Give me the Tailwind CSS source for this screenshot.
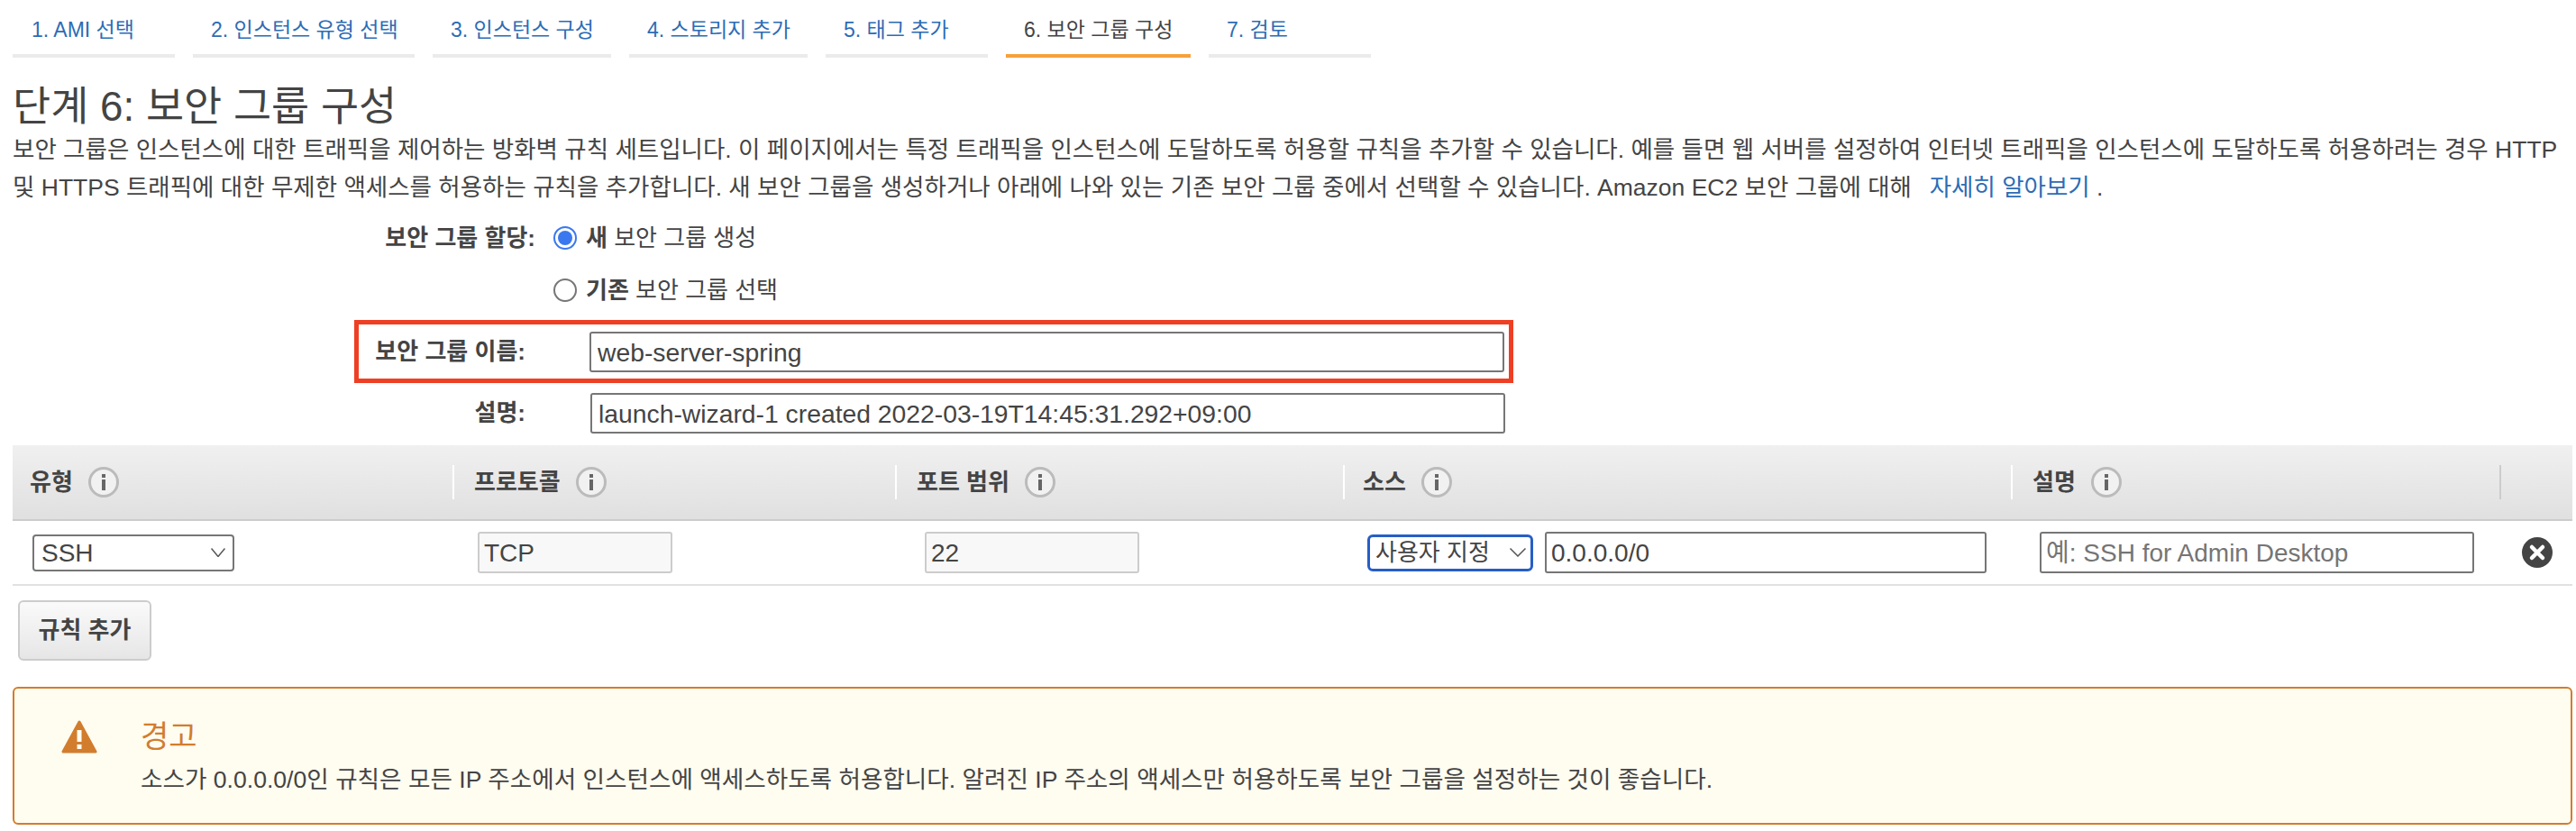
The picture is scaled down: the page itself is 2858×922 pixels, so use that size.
<!DOCTYPE html>
<html lang="ko">
<head>
  <meta charset="UTF-8" />
  <title>단계 6: 보안 그룹 구성</title>
  <script src="https://cdn.jsdelivr.net/npm/@tailwindcss/browser@4"></script>
</head>
<body class="bg-white text-[#444] text-[26px] leading-[41px] font-['Liberation_Sans','Noto_Sans_CJK_KR',sans-serif] overflow-hidden">
<div class="w-[2858px] h-[922px] pl-[14px] pr-[4px]">

  <!-- wizard tabs -->
  <nav class="flex gap-[20px] h-[64px] text-[23px] leading-[30px] text-[#2d6cb5]">
    <a class="w-[180px] pt-[18px] pl-[21px] border-b-4 border-[#ebebeb]">1. AMI 선택</a>
    <a class="w-[246px] pt-[18px] pl-[20px] border-b-4 border-[#ebebeb]">2. 인스턴스 유형 선택</a>
    <a class="w-[198px] pt-[18px] pl-[20px] border-b-4 border-[#ebebeb]">3. 인스턴스 구성</a>
    <a class="w-[198px] pt-[18px] pl-[20px] border-b-4 border-[#ebebeb]">4. 스토리지 추가</a>
    <a class="w-[180px] pt-[18px] pl-[20px] border-b-4 border-[#ebebeb]">5. 태그 추가</a>
    <a class="w-[205px] pt-[18px] pl-[20px] border-b-4 border-[#f7a13c] text-[#444]">6. 보안 그룹 구성</a>
    <a class="w-[180px] pt-[18px] pl-[20px] border-b-4 border-[#ebebeb]">7. 검토</a>
  </nav>

  <h1 class="mt-[28px] mb-[-1px] text-[45.8px] leading-[54px] font-normal">단계 6: 보안 그룹 구성</h1>
  <p class="text-[26.5px] leading-[42px]">보안 그룹은 인스턴스에 대한 트래픽을 제어하는 방화벽 규칙 세트입니다. 이 페이지에서는 특정 트래픽을 인스턴스에 도달하도록 허용할 규칙을 추가할 수 있습니다. 예를 들면 웹 서버를 설정하여 인터넷 트래픽을 인스턴스에 도달하도록 허용하려는 경우 HTTP<br />및 HTTPS 트래픽에 대한 무제한 액세스를 허용하는 규칙을 추가합니다. 새 보안 그룹을 생성하거나 아래에 나와 있는 기존 보안 그룹 중에서 선택할 수 있습니다. Amazon EC2 보안 그룹에 대해 &nbsp;<a class="ml-[5px] text-[#2d6cb5]">자세히 알아보기</a> .</p>

  <!-- security group form -->
  <div class="mt-[15px] flex items-center h-[40px]">
    <label class="w-[580px] text-right font-bold">보안 그룹 할당:</label>
    <span class="ml-[20px] w-[26px] h-[26px] rounded-full border-2 border-[#3b78f0] flex items-center justify-center">
      <span class="w-[16px] h-[16px] rounded-full bg-[#3b78f0]"></span>
    </span>
    <span class="ml-[10px]"><b>새</b> 보안 그룹 생성</span>
  </div>
  <div class="mt-[18px] flex items-center h-[40px]">
    <span class="ml-[600px] w-[26px] h-[26px] rounded-full border-2 border-[#767676] bg-white"></span>
    <span class="ml-[10px]"><b>기존</b> 보안 그룹 선택</span>
  </div>

  <div class="mt-[13px] ml-[379px] w-[1286px] h-[70px] border-[5px] border-[#ee3f24] flex items-center">
    <label class="w-[185px] text-right font-bold shrink-0">보안 그룹 이름:</label>
    <input class="ml-[71px] w-[1015px] h-[45px] border-2 border-[#767676] rounded-[3px] px-[7px] pt-[3px] text-[28.3px] text-[#444] outline-none" value="web-server-spring" />
  </div>
  <div class="mt-[11px] flex items-center">
    <label class="w-[569px] text-right font-bold shrink-0">설명:</label>
    <input class="ml-[72px] w-[1015px] h-[45px] border-2 border-[#767676] rounded-[3px] px-[7px] pt-[2px] text-[28.3px] text-[#444] outline-none" value="launch-wizard-1 created 2022-03-19T14:45:31.292+09:00" />
  </div>

  <!-- rules table -->
  <div class="mt-[13px] w-[2840px] h-[84px] flex items-center border-b-2 border-[#ccc] bg-gradient-to-b from-[#f0f0f0] to-[#e0e0e0] font-bold">
    <div class="w-[490px] h-[38px] flex items-center pl-[19px] border-r-2 border-[#fff]">유형<i class="ml-[17px] w-[34px] h-[34px] flex items-center justify-center"><svg width="34" height="34" viewBox="0 0 34 34"><circle cx="17" cy="17" r="15.5" fill="#f1f1f1" stroke="#bbb" stroke-width="3"/><rect x="15" y="14" width="4" height="12" fill="#666"/><rect x="15" y="8" width="4" height="4" fill="#666"/></svg></i></div>
    <div class="w-[491px] h-[38px] flex items-center pl-[22px] border-r-2 border-[#fff]">프로토콜<i class="ml-[17px] w-[34px] h-[34px] flex items-center justify-center"><svg width="34" height="34" viewBox="0 0 34 34"><circle cx="17" cy="17" r="15.5" fill="#f1f1f1" stroke="#bbb" stroke-width="3"/><rect x="15" y="14" width="4" height="12" fill="#666"/><rect x="15" y="8" width="4" height="4" fill="#666"/></svg></i></div>
    <div class="w-[497px] h-[38px] flex items-center pl-[22px] border-r-2 border-[#fff]">포트 범위<i class="ml-[17px] w-[34px] h-[34px] flex items-center justify-center"><svg width="34" height="34" viewBox="0 0 34 34"><circle cx="17" cy="17" r="15.5" fill="#f1f1f1" stroke="#bbb" stroke-width="3"/><rect x="15" y="14" width="4" height="12" fill="#666"/><rect x="15" y="8" width="4" height="4" fill="#666"/></svg></i></div>
    <div class="w-[741px] h-[38px] flex items-center pl-[20px] border-r-2 border-[#fff]">소스<i class="ml-[17px] w-[34px] h-[34px] flex items-center justify-center"><svg width="34" height="34" viewBox="0 0 34 34"><circle cx="17" cy="17" r="15.5" fill="#f1f1f1" stroke="#bbb" stroke-width="3"/><rect x="15" y="14" width="4" height="12" fill="#666"/><rect x="15" y="8" width="4" height="4" fill="#666"/></svg></i></div>
    <div class="w-[542px] h-[38px] flex items-center pl-[22px] border-r-2 border-[#ccc]">설명<i class="ml-[17px] w-[34px] h-[34px] flex items-center justify-center"><svg width="34" height="34" viewBox="0 0 34 34"><circle cx="17" cy="17" r="15.5" fill="#f1f1f1" stroke="#bbb" stroke-width="3"/><rect x="15" y="14" width="4" height="12" fill="#666"/><rect x="15" y="8" width="4" height="4" fill="#666"/></svg></i></div>
  </div>
  <div class="w-[2840px] h-[72px] flex items-center border-b-2 border-[#e1e1e1]">
    <div class="ml-[22px] w-[224px] h-[41px] flex items-center justify-between border-2 border-[#767676] rounded-[4px] pl-[8px] pr-[8px] text-[28px]">SSH<svg width="16" height="10" viewBox="0 0 16 10"><path d="M0.5 0.5l7.5 9 7.5-9" fill="none" stroke="#555" stroke-width="1.5"/></svg></div>
    <input class="ml-[270px] w-[216px] h-[46px] border-2 border-[#ccc] bg-[#f8f8f8] rounded-[3px] px-[5px] pt-[2px] text-[28px] text-[#444] outline-none" value="TCP" readonly />
    <input class="ml-[280px] w-[238px] h-[46px] border-2 border-[#ccc] bg-[#f8f8f8] rounded-[3px] px-[5px] pt-[2px] text-[28px] text-[#444] outline-none" value="22" readonly />
    <div class="ml-[253px] w-[184px] h-[41px] flex items-center justify-between border-[3px] border-[#265ec6] rounded-[6px] pl-[6px] pr-[5px]">사용자 지정<svg width="18" height="10" viewBox="0 0 18 10"><path d="M0.5 0.5l8.5 8.5 8.5-8.5" fill="none" stroke="#555" stroke-width="1.5"/></svg></div>
    <input class="ml-[13px] w-[490px] h-[46px] border-2 border-[#767676] rounded-[3px] px-[5px] pt-[2px] text-[28px] text-[#444] outline-none" value="0.0.0.0/0" />
    <input class="ml-[59px] w-[482px] h-[46px] border-2 border-[#767676] rounded-[3px] px-[5px] pt-[2px] text-[28px] text-[#444] outline-none placeholder:text-[#757575]" placeholder="예: SSH for Admin Desktop" />
    <svg class="ml-[52px]" width="36" height="36" viewBox="0 0 36 36"><circle cx="18" cy="18" r="17" fill="#444"/><path d="M12 12l12 12M24 12l-12 12" stroke="#fff" stroke-width="4.5" stroke-linecap="round"/></svg>
  </div>

  <button class="mt-[16px] ml-[6px] w-[148px] h-[67px] block border-2 border-[#ccc] rounded-[6px] bg-gradient-to-b from-[#fafafa] to-[#e6e6e6] font-bold">규칙 추가</button>

  <!-- warning -->
  <div class="mt-[29px] w-[2840px] h-[153px] border-2 border-[#d27d2d] rounded-[6px] bg-[#fffcf0] flex">
    <svg class="ml-[52px] mt-[35px] shrink-0" width="40" height="37" viewBox="0 0 40 37"><path d="M20 2L38 35H2z" fill="#d27d2d" stroke="#d27d2d" stroke-linejoin="round" stroke-width="3"/><rect x="17.5" y="11" width="5" height="13" fill="#fffcf0"/><rect x="17.5" y="27" width="5" height="5" fill="#fffcf0"/></svg>
    <div class="ml-[48px] pt-[28px]">
      <div class="text-[34px] leading-[50px] text-[#d27d2d]">경고</div>
      <div class="mt-[3px] text-[26.6px]">소스가 0.0.0.0/0인 규칙은 모든 IP 주소에서 인스턴스에 액세스하도록 허용합니다. 알려진 IP 주소의 액세스만 허용하도록 보안 그룹을 설정하는 것이 좋습니다.</div>
    </div>
  </div>

</div>
</body>
</html>
